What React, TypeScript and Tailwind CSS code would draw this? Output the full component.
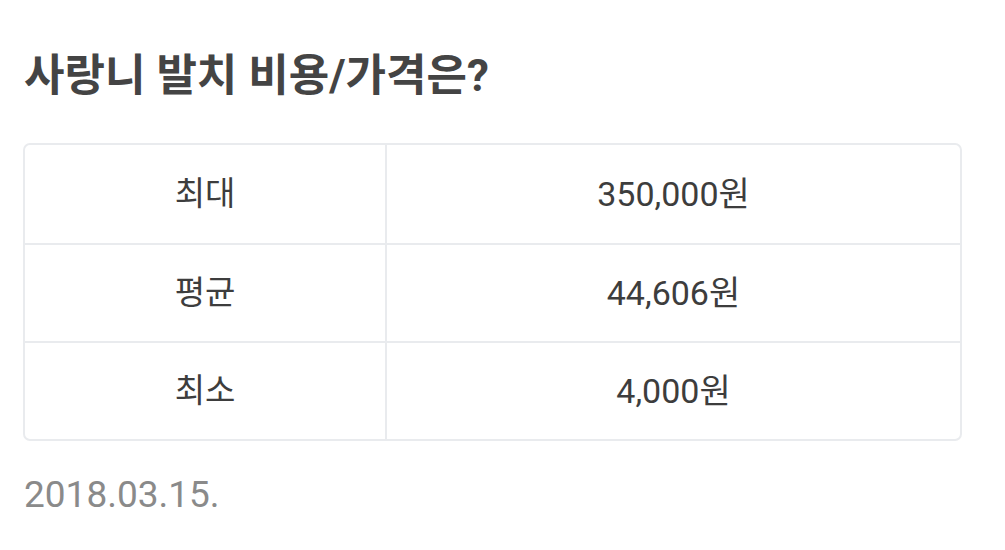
import React from "react";

const rows = [
  { label: "최대", value: "350,000원" },
  { label: "평균", value: "44,606원" },
  { label: "최소", value: "4,000원" },
];

export default function App() {
  return (
    <div
      className="w-[1005px] h-[550px] bg-white overflow-hidden pl-[23px] pr-[43px]"
      style={{ fontFamily: 'Roboto, "Noto Sans CJK KR", sans-serif' }}
    >
      <h1 className="pt-[44px] text-[44px] leading-[64px] font-bold text-[#444444] pl-[1px]">
        사랑니 발치 비용/가격은?
      </h1>
      <div className="mt-[35px] w-[939px] border-2 border-[#e9ebee] rounded-[7px] overflow-hidden">
        {rows.map((r, i) => (
          <div
            key={r.label}
            className={`grid grid-cols-[362px_1fr] h-[98px] ${i > 0 ? "border-t-2 border-[#e9ebee]" : ""}`}
          >
            <div className="flex items-center justify-center border-r-2 border-[#e9ebee] text-[33px] text-[#3d3d3d]">
              {r.label}
            </div>
            <div className="flex items-center justify-center text-[34px] text-[#3d3d3d]">
              {r.value}
            </div>
          </div>
        ))}
      </div>
      <div className="mt-[28px] text-[37px] leading-[52px] text-[#8a8a8a] pl-[1px]">2018.03.15.</div>
    </div>
  );
}
